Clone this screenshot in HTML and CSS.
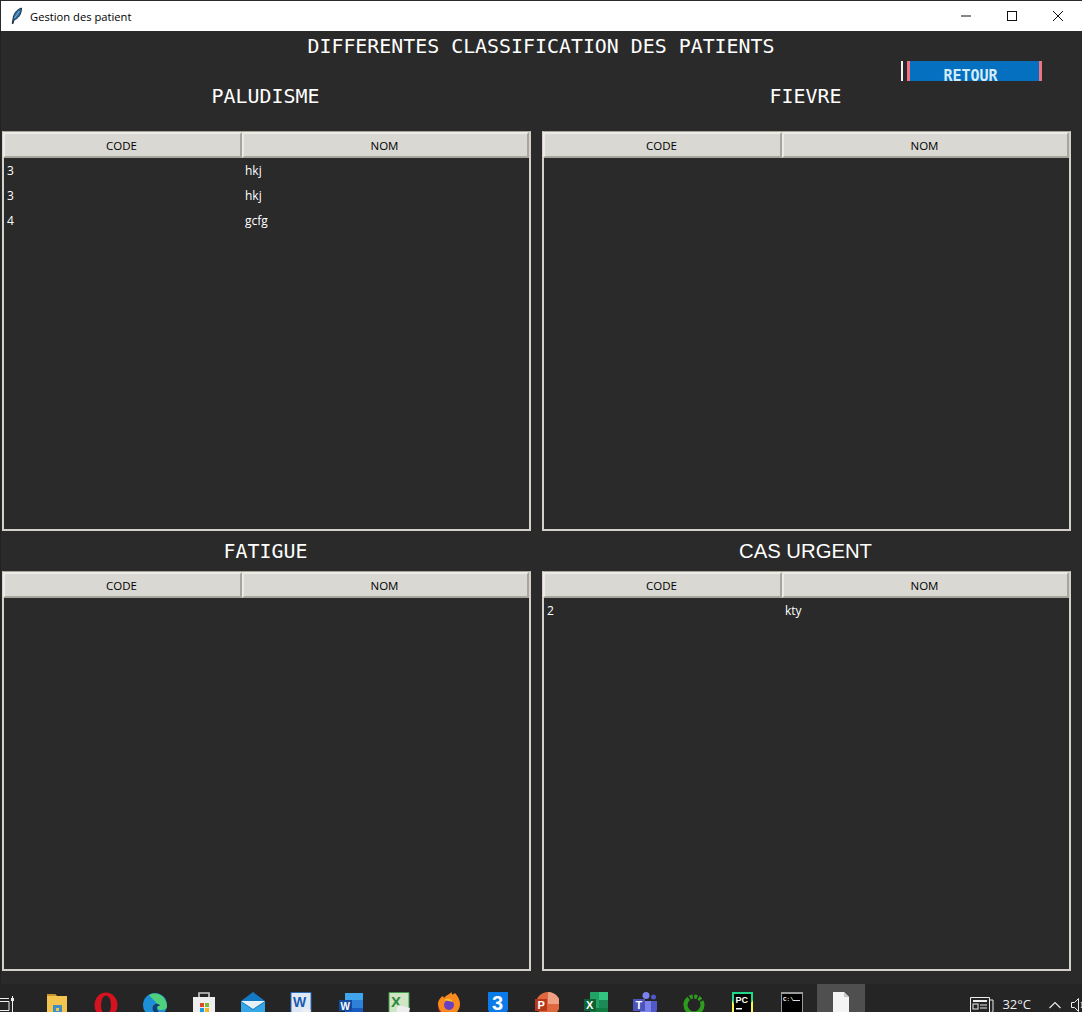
FILE: index.html
```html
<!DOCTYPE html>
<html lang="fr">

<head>
  <meta charset="UTF-8" />
  <title>Gestion des patient</title>
  <link rel="stylesheet" href="styles.css">
</head>

<body>
  <div class="titlebar">
    <svg class="app-icon" width="16" height="18" viewBox="0 0 16 18">
      <path d="M12.500 1C7.500 2.500 4.500 7 4 12l-.8 4.500.8.200L5 13c4.500-1.500 7.500-6 7.500-12z" fill="#2f6f9f" stroke="#0b2236" stroke-width=".9" />
      <path d="M10.500 4L5.500 11" stroke="#9cc8e6" stroke-width=".8" />
    </svg>
    <span class="app-name">Gestion des patient</span>
    <div class="win-controls">
      <svg width="46" height="30" viewBox="0 0 46 30"><path d="M18 15h10" stroke="#111" stroke-width="1" /></svg>
      <svg width="46" height="30" viewBox="0 0 46 30"><rect x="18.500" y="10.500" width="9" height="9" fill="none" stroke="#111" /></svg>
      <svg width="46" height="30" viewBox="0 0 46 30"><path d="M18 10l10 10M28 10L18 20" stroke="#111" stroke-width="1" /></svg>
    </div>
  </div>

  <div class="content">
    <h1 class="main-title">DIFFERENTES CLASSIFICATION DES PATIENTS</h1>

    <div class="retour-mark"></div>
    <button class="retour-btn">RETOUR</button>

    <div class="grid-container">
      <section class="group">
        <h2 class="group-title first">PALUDISME</h2>
        <div class="panel">
          <div class="head"><div class="head-cell">CODE</div><div class="head-cell">NOM</div></div>
          <div class="row"><span>3</span><span>hkj</span></div>
          <div class="row"><span>3</span><span>hkj</span></div>
          <div class="row"><span>4</span><span>gcfg</span></div>
        </div>
      </section>

      <section class="group">
        <h2 class="group-title first">FIEVRE</h2>
        <div class="panel">
          <div class="head"><div class="head-cell">CODE</div><div class="head-cell">NOM</div></div>
        </div>
      </section>

      <section class="group">
        <h2 class="group-title">FATIGUE</h2>
        <div class="panel">
          <div class="head"><div class="head-cell">CODE</div><div class="head-cell">NOM</div></div>
        </div>
      </section>

      <section class="group">
        <h2 class="group-title sans">CAS URGENT</h2>
        <div class="panel">
          <div class="head"><div class="head-cell">CODE</div><div class="head-cell">NOM</div></div>
          <div class="row"><span>2</span><span>kty</span></div>
        </div>
      </section>
    </div>
  </div>

  <div class="taskbar">
    <svg class="task-view" width="14" height="28" viewBox="0 0 14 28">
      <path d="M0 14.500h9M0 17.500h9v9H0M12.500 12v16" fill="none" stroke="#eee" stroke-width="1" />
      <rect x="11" y="14" width="3" height="3" fill="#eee" />
    </svg>
    <div class="task-icons">
      <!-- folder -->
      <div class="task-slot"><svg width="24" height="24" viewBox="0 0 24 24">
        <path d="M2 2h8l2 2h10v20H2z" fill="#f3c54e" /><path d="M2 2h8l1 2H2z" fill="#c9952b" />
        <rect x="8" y="13" width="9" height="9" fill="#3f8fc6" /><rect x="11" y="16" width="3" height="3" fill="#f3c54e" />
      </svg></div>
      <!-- opera -->
      <div class="task-slot"><svg width="24" height="24" viewBox="0 0 24 24">
        <ellipse cx="12" cy="13" rx="11.500" ry="12.500" fill="#d5121f" /><ellipse cx="12" cy="13" rx="5" ry="9.500" fill="#252525" />
      </svg></div>
      <!-- edge -->
      <div class="task-slot"><svg width="24" height="24" viewBox="0 0 24 24">
        <circle cx="12" cy="13" r="12" fill="#1d8fd6" /><path d="M6 3c8-4 17 1 18 11 0 3-3 4-6 4-3 0-5-2-3-4-1-4-6-7-9-11z" fill="#4fd07c" />
        <path d="M10 14c3-4 7-2 7 0-4-1-4 4 0 7-4 2-9-2-7-7z" fill="#143e73" />
      </svg></div>
      <!-- store -->
      <div class="task-slot"><svg width="24" height="24" viewBox="0 0 24 24">
        <path d="M7 5V1h10v4" fill="none" stroke="#ccc" stroke-width="1.600" /><rect x="1" y="5" width="22" height="19" fill="#eee" />
        <rect x="8" y="11" width="4" height="4" fill="#e0482c" /><rect x="13" y="11" width="4" height="4" fill="#7fba2a" />
        <rect x="8" y="16" width="4" height="4" fill="#1e9be0" /><rect x="13" y="16" width="4" height="4" fill="#f5b71a" />
      </svg></div>
      <!-- mail -->
      <div class="task-slot"><svg width="24" height="24" viewBox="0 0 24 24">
        <path d="M0 9l12-9 12 9v15H0z" fill="#1479c4" /><path d="M0 9h24l-12 8z" fill="#e6f1f8" /><path d="M0 10l12 8 12-8v14H0z" fill="#35a6e6" />
      </svg></div>
      <!-- old word -->
      <div class="task-slot"><svg width="24" height="24" viewBox="0 0 24 24">
        <path d="M1 .500h20v21H1z" fill="#dfe9f5" stroke="#2c6cb8" /><text class="icon-letter old-word" x="3" y="15">W</text><path d="M13 16l8 2-2 6-8-2z" fill="#eee" />
      </svg></div>
      <!-- word -->
      <div class="task-slot"><svg width="24" height="24" viewBox="0 0 24 24">
        <rect x="6" y="1" width="18" height="23" fill="#2f80d8" /><rect x="6" y="1" width="18" height="7" fill="#41a5ee" /><rect x="6" y="16" width="18" height="8" fill="#185abd" />
        <rect x="0" y="8" width="13" height="11" fill="#134a9f" /><text class="icon-letter small" x="1.500" y="17.500">W</text>
      </svg></div>
      <!-- old excel -->
      <div class="task-slot"><svg width="24" height="24" viewBox="0 0 24 24">
        <path d="M1 .500h20v20H1z" fill="#cfe5c4" stroke="#3f9a4a" /><text class="icon-letter old-excel" x="3" y="15">X</text><path d="M10 13l12 3-2 8-12-3z" fill="#eee" />
      </svg></div>
      <!-- firefox -->
      <div class="task-slot"><svg width="24" height="24" viewBox="0 0 24 24">
        <path d="M1 12C1 8 4 5 6 4l1 2c2-3 6-4 8-6-1 3 1 3 3 1 3 3 5 7 5 11 0 6-5 12-11 12S1 18 1 12z" fill="#f98a1f" />
        <path d="M1 13c1 7 8 11 14 9-3 3-14 2-14-9z" fill="#e5362e" /><circle cx="12" cy="13" r="5" fill="#6a3fc4" /><path d="M7 8c3-2 7-2 9 2-3-1-6-1-9-2z" fill="#f9c32d" />
      </svg></div>
      <!-- blue 3 -->
      <div class="task-slot"><svg width="24" height="24" viewBox="0 0 24 24">
        <path d="M2 0h20v17c0 4-5 6-10 7C7 23 2 21 2 17z" fill="#0b7bea" /><text class="icon-letter three" x="6" y="18">3</text>
      </svg></div>
      <!-- powerpoint -->
      <div class="task-slot"><svg width="24" height="24" viewBox="0 0 24 24">
        <circle cx="13" cy="12" r="12" fill="#e0683f" /><path d="M13 0a12 12 0 0 1 12 12H13z" fill="#f0a184" /><rect x="0" y="7" width="12" height="12" fill="#b7391c" />
        <text class="icon-letter" x="2.500" y="17">P</text>
      </svg></div>
      <!-- excel -->
      <div class="task-slot"><svg width="24" height="24" viewBox="0 0 24 24">
        <rect x="6" y="0" width="18" height="24" fill="#21a366" /><rect x="15" y="0" width="9" height="8" fill="#33c481" /><rect x="15" y="8" width="9" height="8" fill="#1d8a55" /><rect x="6" y="16" width="18" height="8" fill="#107c41" />
        <rect x="0" y="7" width="12" height="12" fill="#0c6234" /><text class="icon-letter" x="2" y="17">X</text>
      </svg></div>
      <!-- teams -->
      <div class="task-slot"><svg width="24" height="24" viewBox="0 0 24 24">
        <circle cx="13" cy="3.500" r="3.500" fill="#7b83eb" /><circle cx="20.500" cy="5" r="2.500" fill="#5059c9" /><path d="M15 9h9v8c0 4-3 6-6 6-2 0-3-1-3-2z" fill="#5059c9" />
        <path d="M7 9h11v10c0 3-3 5-5 5s-5-2-6-5z" fill="#7b83eb" /><rect x="0" y="7" width="12" height="12" fill="#4b53bc" /><text class="icon-letter" x="2.500" y="17">T</text>
      </svg></div>
      <!-- green ring -->
      <div class="task-slot"><svg width="24" height="24" viewBox="0 0 24 24">
        <circle cx="12" cy="13" r="8.500" fill="none" stroke="#2e9c1f" stroke-width="4" stroke-dasharray="34 1.500 3 1.500 3 1.500 3 1.500" />
      </svg></div>
      <!-- pycharm -->
      <div class="task-slot"><svg width="24" height="24" viewBox="0 0 24 24">
        <rect x="1" y="0" width="21" height="21" fill="#21d789" /><path d="M1 21V8l6 13zM22 21V8l-8 13z" fill="#fcf84a" /><rect x="1" y="17" width="21" height="7" fill="#fcf84a" />
        <rect x="3" y="2" width="17" height="19" fill="#000" /><text class="icon-letter pc" x="4.500" y="11">PC</text><rect x="5" y="16" width="6" height="1.500" fill="#fff" />
      </svg></div>
      <!-- console -->
      <div class="task-slot"><svg width="24" height="24" viewBox="0 0 24 24">
        <rect x="1" y="0" width="22" height="24" fill="#9a9a9a" /><rect x="2" y="2" width="20" height="22" fill="#000" />
        <text class="icon-letter cmd" x="3" y="9">C:\</text><rect x="13" y="8" width="7" height="1" fill="#ddd" />
      </svg></div>
      <!-- blank file, active -->
      <div class="task-slot active"><svg width="24" height="24" viewBox="0 0 24 24">
        <path d="M4 0h11l5 5v19H4z" fill="#f4f4f4" /><path d="M15 0l5 5h-5z" fill="#c8c8c8" />
      </svg></div>
    </div>

    <div class="tray">
      <svg class="news" width="24" height="18" viewBox="0 0 24 18">
        <path d="M.500 1.500h19v15H.500zM19.500 4h3.500v11c0 1-1 1.500-3.500 1.500" fill="none" stroke="#eee" />
        <rect x="3" y="4" width="14" height="2" fill="#eee" /><rect x="3" y="8" width="5" height="5" fill="none" stroke="#eee" /><path d="M10 9h7M10 12h7" stroke="#eee" />
      </svg>
      <span class="temp">32°C</span>
      <svg class="chevron" width="12" height="8" viewBox="0 0 12 8"><path d="M.500 7L6 1.500 11.500 7" fill="none" stroke="#eee" stroke-width="1.100" /></svg>
      <svg class="speaker" width="14" height="16" viewBox="0 0 14 16">
        <path d="M.500 5.500h3l4-4v13l-4-4h-3z" fill="none" stroke="#eee" /><path d="M10 5c1.500 1.500 1.500 4.500 0 6M12.500 3c2.500 3 2.500 7 0 10" fill="none" stroke="#eee" />
      </svg>
    </div>
  </div>
</body>

</html>
```

FILE: styles.css
```css
html,
body {
  height: 100%;
}

body {
  margin: 0;
  height: 1012px;
  overflow: hidden;
  display: flex;
  flex-direction: column;
  background-color: #2a2a2a;
  font-family: 'Open Sans', 'Noto Sans', sans-serif;
}

/* Window title bar */
.titlebar {
  height: 30px;
  margin-left: 1px;
  border-top: 1px solid #2a2a2a;
  background-color: #ffffff;
  display: flex;
  align-items: center;
  flex-shrink: 0;
}

.app-icon {
  margin-left: 8px;
  margin-right: 5px;
}

.app-name {
  font-size: 11.2px;
  color: #000000;
  font-family: 'Open Sans', sans-serif;
}

.win-controls {
  margin-left: auto;
  margin-right: 1px;
  display: flex;
}

/* Main dark area */
.content {
  position: relative;
  flex: 1;
  min-height: 0;
  background-color: #2a2a2a;
  box-shadow: inset 1px 0 #222222;
}

.main-title {
  margin: 0;
  height: 30px;
  line-height: 32px;
  text-align: center;
  font-family: 'DejaVu Sans Mono', monospace;
  font-size: 19.9px;
  font-weight: 400;
  color: #ffffff;
}

.retour-mark {
  position: absolute;
  left: 901px;
  top: 30px;
  width: 2px;
  height: 20px;
  background-color: #f2f2f2;
}

.retour-btn {
  position: absolute;
  left: 907px;
  top: 30px;
  width: 135px;
  height: 20px;
  box-sizing: border-box;
  padding: 9px 8px 0 0;
  margin: 0;
  overflow: hidden;
  border: 0;
  border-left: 3px solid #f0737f;
  border-right: 3px solid #f0737f;
  background-color: #0570c0;
  color: #d4ebfa;
  font-family: 'DejaVu Sans Mono', monospace;
  font-size: 15px;
  font-weight: 700;
  line-height: 13px;
  text-align: center;
}

.grid-container {
  display: grid;
  grid-template-columns: 529px 529px;
  column-gap: 11px;
  padding-left: 2px;
}

.group-title {
  margin: 0;
  height: 40px;
  padding-right: 2px;
  line-height: 42px;
  text-align: center;
  font-family: 'DejaVu Sans Mono', monospace;
  font-size: 19.9px;
  font-weight: 400;
  color: #ffffff;
}

.group-title.first {
  height: 70px;
  line-height: 72px;
}

.group-title.sans {
  font-family: 'Liberation Sans', Arial, sans-serif;
  font-size: 20.3px;
  line-height: 40px;
}

/* Treeview-like tables */
.panel {
  width: 529px;
  height: 400px;
  box-sizing: border-box;
  border: 2px solid #d3d1ca;
  border-top: 1px solid #a8a59d;
  background-color: #2a2a2a;
}

.head {
  display: grid;
  grid-template-columns: 239px 1fr;
  height: 26px;
  margin-left: -1px;
}

.head-cell {
  display: flex;
  align-items: center;
  justify-content: center;
  box-sizing: border-box;
  padding-right: 2px;
  background-color: #d9d8d3;
  border: 2px solid #ecebe6;
  border-right-color: #a8a59d;
  border-bottom-color: #a8a59d;
  font-size: 11.5px;
  color: #000000;
}

.row {
  display: grid;
  grid-template-columns: 238px 1fr;
  height: 25px;
  margin-left: -1px;
  line-height: 26px;
  font-size: 12px;
  color: #ffffff;
}

.row span {
  padding-left: 4px;
}

/* Windows taskbar, cut off at the bottom of the shot */
.taskbar {
  position: relative;
  height: 28px;
  flex-shrink: 0;
  display: flex;
  background-color: #252525;
  overflow: hidden;
}

.task-view {
  position: absolute;
  left: 0;
  top: 0;
}

.task-icons {
  display: flex;
  margin-left: 32px;
}

.task-slot {
  width: 49px;
  height: 28px;
  padding-top: 8px;
  box-sizing: border-box;
  display: flex;
  justify-content: center;
}

.task-slot.active {
  width: 48px;
  margin-left: 1px;
  background-color: #4f4f4f;
}

.icon-letter {
  font-family: 'Liberation Sans', sans-serif;
  font-size: 11px;
  font-weight: 700;
  fill: #ffffff;
}

.icon-letter.small {
  font-size: 10px;
}

.icon-letter.old-word {
  font-size: 14px;
  fill: #1b5cb0;
}

.icon-letter.old-excel {
  font-size: 15px;
  fill: #2d8a3a;
}

.icon-letter.three {
  font-size: 20px;
}

.icon-letter.pc {
  font-size: 9px;
}

.icon-letter.cmd {
  font-family: 'Liberation Mono', monospace;
  font-size: 6px;
}

.tray {
  margin-left: auto;
  margin-right: -3px;
  display: flex;
  align-items: flex-start;
  padding-top: 12px;
  color: #eeeeee;
  font-size: 13px;
}

.news {
  margin-right: 8px;
}

.temp {
  line-height: 15px;
  margin-top: 1px;
  margin-right: 18px;
}

.chevron {
  margin-top: 5px;
  margin-right: 10px;
}

.speaker {
  margin-top: 1px;
}
```
